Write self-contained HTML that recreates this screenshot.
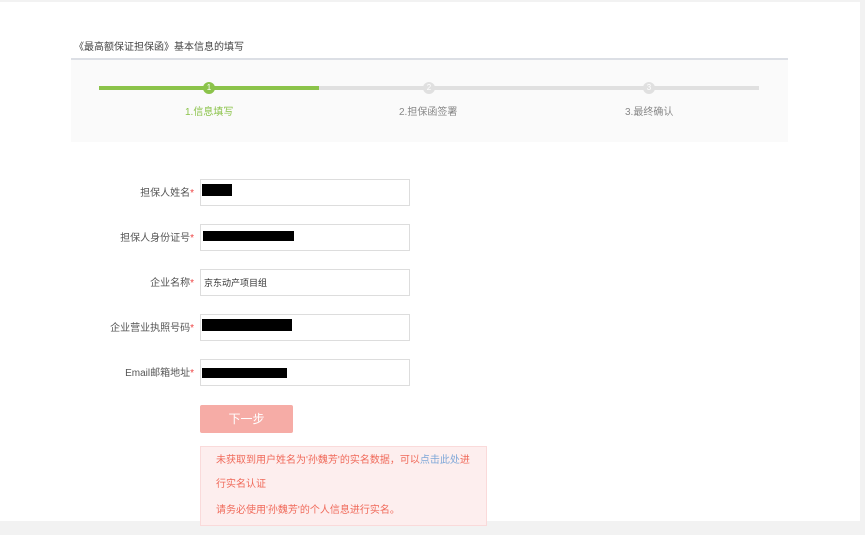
<!DOCTYPE html>
<html><head><meta charset="utf-8"><style>
body{margin:0;width:865px;height:535px;background:#f2f2f2;font-family:"Liberation Sans","Noto Sans CJK SC",sans-serif;font-size:10px;color:#555;position:relative;overflow:hidden}
.p{position:absolute;left:0;top:2px;width:860px;height:519px;background:#fff}
.a{position:absolute}
.lbl{position:absolute;right:671px;width:120px;text-align:right;font-size:10px;color:#555}
.lbl b{color:#e44;font-weight:normal}
.in{position:absolute;left:200px;width:208px;height:25px;border:1px solid #ddd;background:#fff}
.bk{position:absolute;background:#000}
.dot{position:absolute;width:12px;height:12px;border-radius:50%;color:#fff;font-size:8px;text-align:center;line-height:12px}
</style></head><body>
<div class="p"></div>
<div class="a" style="left:74px;top:38px;font-size:10px;color:#444">《最高额保证担保函》基本信息的填写</div>
<div class="a" style="left:71px;top:58px;width:717px;height:2px;background:#dcdfe5"></div>
<div class="a" style="left:71px;top:60px;width:717px;height:82px;background:#fafafa"></div>
<div class="a" style="left:99px;top:86px;width:220px;height:4px;background:#8bc34a"></div>
<div class="a" style="left:319px;top:86px;width:440px;height:4px;background:#e0e0e0"></div>
<div class="dot" style="left:203px;top:82px;background:#8bc34a">1</div>
<div class="dot" style="left:423px;top:82px;background:#e0e0e0">2</div>
<div class="dot" style="left:643px;top:82px;background:#e0e0e0">3</div>
<div class="a" style="left:185px;top:103px;color:#8bc34a">1.信息填写</div>
<div class="a" style="left:399px;top:103px;color:#888">2.担保函签署</div>
<div class="a" style="left:625px;top:103px;color:#888">3.最终确认</div>

<div class="lbl" style="top:184px">担保人姓名<b>*</b></div>
<div class="in" style="top:179px"></div><div class="bk" style="left:202px;top:184px;width:30px;height:12px"></div>
<div class="lbl" style="top:229px">担保人身份证号<b>*</b></div>
<div class="in" style="top:224px"></div><div class="bk" style="left:203px;top:231px;width:91px;height:10px"></div>
<div class="lbl" style="top:274px">企业名称<b>*</b></div>
<div class="in" style="top:269px"></div><div class="a" style="left:204px;top:276px;font-size:9px;color:#333">京东动产项目组</div>
<div class="lbl" style="top:319px">企业营业执照号码<b>*</b></div>
<div class="in" style="top:314px"></div><div class="bk" style="left:202px;top:319px;width:90px;height:12px"></div>
<div class="lbl" style="top:364px">Email邮箱地址<b>*</b></div>
<div class="in" style="top:359px"></div><div class="bk" style="left:202px;top:368px;width:85px;height:10px"></div>

<div class="a" style="left:200px;top:405px;width:93px;height:28px;background:#f6aca6;border-radius:2px;color:#fff;font-size:12px;text-align:center;line-height:28px">下一步</div>
<div class="a" style="left:200px;top:446px;width:285px;height:78px;background:#fdeeee;border:1px solid #fadada"></div>
<div class="a" style="left:216px;top:453px;color:#f06a5a;font-size:10px;line-height:15px">未获取到用户姓名为'孙魏芳'的实名数据，可以<span style="color:#7fa7d8">点击此处</span>进</div>
<div class="a" style="left:216px;top:477px;color:#f06a5a;font-size:10px;line-height:15px">行实名认证</div>
<div class="a" style="left:216px;top:503px;color:#f06a5a;font-size:10px;line-height:15px">请务必使用'孙魏芳'的个人信息进行实名。</div>
</body></html>
